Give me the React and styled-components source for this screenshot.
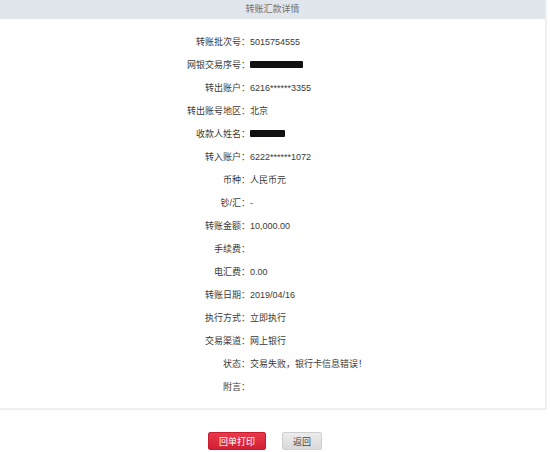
import React from 'react'
import styled, { createGlobalStyle } from 'styled-components'

const GlobalStyle = createGlobalStyle`
  html, body {
    margin: 0;
    padding: 0;
    background: #fff;
  }
  body {
    font-family: "Liberation Sans", "Noto Sans CJK SC", sans-serif;
    color: #3a3a3a;
  }
`

const details = [
  { label: '转账批次号', value: '5015754555' },
  { label: '网银交易序号', redact: 53 },
  { label: '转出账户', value: '6216******3355' },
  { label: '转出账号地区', value: '北京' },
  { label: '收款人姓名', redact: 35 },
  { label: '转入账户', value: '6222******1072' },
  { label: '币种', value: '人民币元' },
  { label: '钞/汇', value: '-' },
  { label: '转账金额', value: '10,000.00' },
  { label: '手续费', value: '' },
  { label: '电汇费', value: '0.00' },
  { label: '转账日期', value: '2019/04/16' },
  { label: '执行方式', value: '立即执行' },
  { label: '交易渠道', value: '网上银行' },
  { label: '状态', value: '交易失败，银行卡信息错误！' },
  { label: '附言', value: '' },
]

const App = () => (
  <>
    <GlobalStyle />
    <Panel>
      <PanelHeader>转账汇款详情</PanelHeader>
      <DetailList>
        {details.map((item) => (
          <Row key={item.label}>
            <Label>{item.label}：</Label>
            <Value>
              {item.redact ? <Redacted style={{ width: item.redact }} /> : item.value}
            </Value>
          </Row>
        ))}
      </DetailList>
    </Panel>
    <Actions>
      <Button primary>回单打印</Button>
      <Button>返回</Button>
    </Actions>
  </>
)

const Panel = styled.section`
  width: 547px;
  height: 410px;
  box-sizing: border-box;
  border-right: 2px solid #f0f0f0;
  border-bottom: 2px solid #f0f0f0;
  background: #fff;
  display: flex;
  flex-direction: column;
`

const PanelHeader = styled.header`
  height: 19px;
  line-height: 19px;
  background: #e1e6ed;
  color: #707070;
  font-size: 9px;
  text-align: center;
  padding-left: 0;
`

const DetailList = styled.div`
  padding-top: 11px;
  display: flex;
  flex-direction: column;
`

const Row = styled.div`
  display: grid;
  grid-template-columns: 250px 1fr;
  height: 23px;
  align-items: center;
  font-size: 9px;
`

const Label = styled.span`
  text-align: right;
  white-space: nowrap;
`

const Value = styled.span`
  white-space: nowrap;
  display: flex;
  align-items: center;
`

const Redacted = styled.span`
  display: inline-block;
  height: 7px;
  background: #111;
  border-radius: 1px;
`

const Actions = styled.div`
  display: flex;
  justify-content: center;
  gap: 16px;
  padding: 22px 20px 0 0;
`

const Button = styled.button`
  height: 18px;
  padding: 0 ${({ primary }) => (primary ? '10px' : '9px')};
  min-width: ${({ primary }) => (primary ? '56px' : '40px')};
  border: 1px solid ${({ primary }) => (primary ? '#c81d2e' : '#cfcfcf')};
  border-radius: 2px;
  background: ${({ primary }) =>
    primary ? 'linear-gradient(#e8394a, #d21f32)' : 'linear-gradient(#ececec, #d9d9d9)'};
  color: ${({ primary }) => (primary ? '#fff' : '#444')};
  font-family: "Liberation Sans", "Noto Sans CJK SC", sans-serif;
  font-size: 9px;
  cursor: pointer;
`

export default App
